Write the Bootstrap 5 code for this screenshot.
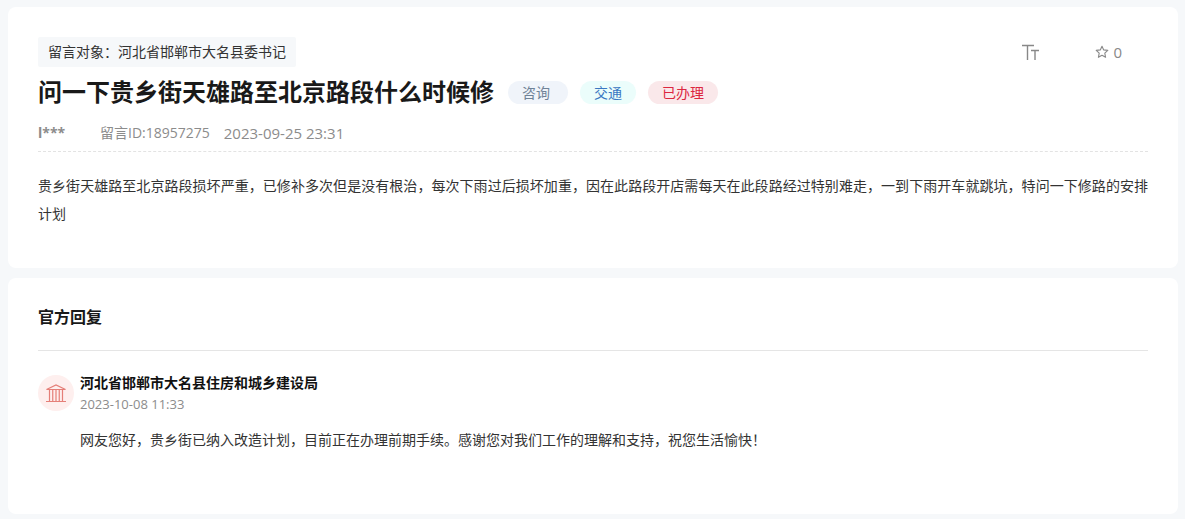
<!DOCTYPE html>
<html lang="zh-CN">
<head>
<meta charset="utf-8">
<meta name="viewport" content="width=device-width, initial-scale=1">
<title>问一下贵乡街天雄路至北京路段什么时候修</title>
<link href="https://cdn.jsdelivr.net/npm/bootstrap@5.3.0/dist/css/bootstrap.min.css" rel="stylesheet">
<style>
  body { background: #f6f8fa; color: #333; font: 14px/28px "Open Sans", "Noto Sans CJK SC", sans-serif; padding: 7px 7px 5px 8px; }
  .panel { background: #fff; border-radius: 8px; padding: 30px 30px 40px; }
  .target { background: #f6f8fa; border-radius: 2px; line-height: 30px; padding: 0 10px; }
  .tools { gap: 56px; padding-right: 26px; }
  .tools button { color: #888; line-height: 30px; gap: 4px; font-size: 15px; }
  .headline { font-size: 24px; font-weight: 700; line-height: 50px; color: #191919; margin-right: 14px; }
  .tag { border-radius: 12px; line-height: 23px; padding: 0 14px; margin-right: 12px; }
  .tag-ask { background: #f0f4fa; color: #6f8297; padding-right: 18px; }
  .tag-field { background: #ebfdfb; color: #3a77c2; }
  .tag-done { background: #fae8ea; color: #dc2740; }
  .meta { color: #8c8c8c; line-height: 32px; padding-bottom: 2px; border-bottom: 1px dashed #e3e3e3; margin-bottom: 20px; }
  .author { width: 62px; }
  .stamp { font-size: 15px; margin-left: 14px; }
  .message { text-align: justify; }
  .replies { padding: 26px 30px 60px; margin-top: 10px; }
  .replies h2 { font-size: 16px; font-weight: 700; line-height: 26px; color: #191919; padding-bottom: 20px; border-bottom: 1px solid #e5e5e5; margin-bottom: 22px; }
  .avatar { width: 36px; height: 36px; background: #feefee; color: #e57f78; margin: 2px 6px 0 0; }
  .office { font-size: 14px; font-weight: 700; line-height: 20px; color: #111; }
  .when { font-size: 13px; line-height: 22px; color: #8c8c8c; }
  .answer { margin-top: 11px; }
</style>
</head>
<body>
<main>
  <article class="panel">
    <div class="d-flex justify-content-between">
      <div class="target">留言对象：河北省邯郸市大名县委书记</div>
      <div class="tools d-flex">
        <button type="button" class="border-0 bg-transparent p-0 d-flex align-items-center" aria-label="字号">
          <svg width="18" height="16" viewBox="0 0 18 16" fill="none" stroke="currentColor" stroke-width="1.4"><path d="M1 1.500h12M6.500 1.500V16M10 6.500h8M14 6.500V16"/></svg>
        </button>
        <button type="button" class="border-0 bg-transparent p-0 d-flex align-items-center" aria-label="收藏">
          <svg width="14" height="14" viewBox="0 0 14 14" fill="none" stroke="currentColor" stroke-width="1.1" stroke-linejoin="round"><path d="M7 1.200 8.700 4.900l4.100.5-3 2.800.8 4.100L7 10.300l-3.600 2 .8-4.100-3-2.800 4.100-.5z"/></svg>
          <span>0</span>
        </button>
      </div>
    </div>
    <div class="d-flex flex-wrap align-items-center">
      <h1 class="headline mb-0">问一下贵乡街天雄路至北京路段什么时候修</h1>
      <span class="tag tag-ask">咨询</span>
      <span class="tag tag-field">交通</span>
      <span class="tag tag-done">已办理</span>
    </div>
    <div class="meta d-flex">
      <strong class="author">l***</strong>
      <span>留言ID:18957275</span>
      <time class="stamp">2023-09-25 23:31</time>
    </div>
    <p class="message mb-0">贵乡街天雄路至北京路段损坏严重，已修补多次但是没有根治，每次下雨过后损坏加重，因在此路段开店需每天在此段路经过特别难走，一到下雨开车就跳坑，特问一下修路的安排计划</p>
  </article>

  <section class="panel replies">
    <h2>官方回复</h2>
    <div class="d-flex align-items-start">
      <div class="avatar rounded-circle d-flex align-items-center justify-content-center flex-shrink-0">
        <svg width="20" height="19" viewBox="0 0 20 19" fill="none" stroke="currentColor" stroke-width="1.2"><path d="M.5 5.500h19L10 1zM0 17.500h20M3.500 5.500v12M6.750 5.500v12M10 5.500v12M13.250 5.500v12M16.500 5.500v12"/></svg>
      </div>
      <div>
        <h3 class="office mb-0">河北省邯郸市大名县住房和城乡建设局</h3>
        <time class="when d-block">2023-10-08 11:33</time>
        <p class="answer mb-0">网友您好，贵乡街已纳入改造计划，目前正在办理前期手续。感谢您对我们工作的理解和支持，祝您生活愉快！</p>
      </div>
    </div>
  </section>
</main>
<script src="https://cdn.jsdelivr.net/npm/bootstrap@5.3.0/dist/js/bootstrap.bundle.min.js"></script>
</body>
</html>
